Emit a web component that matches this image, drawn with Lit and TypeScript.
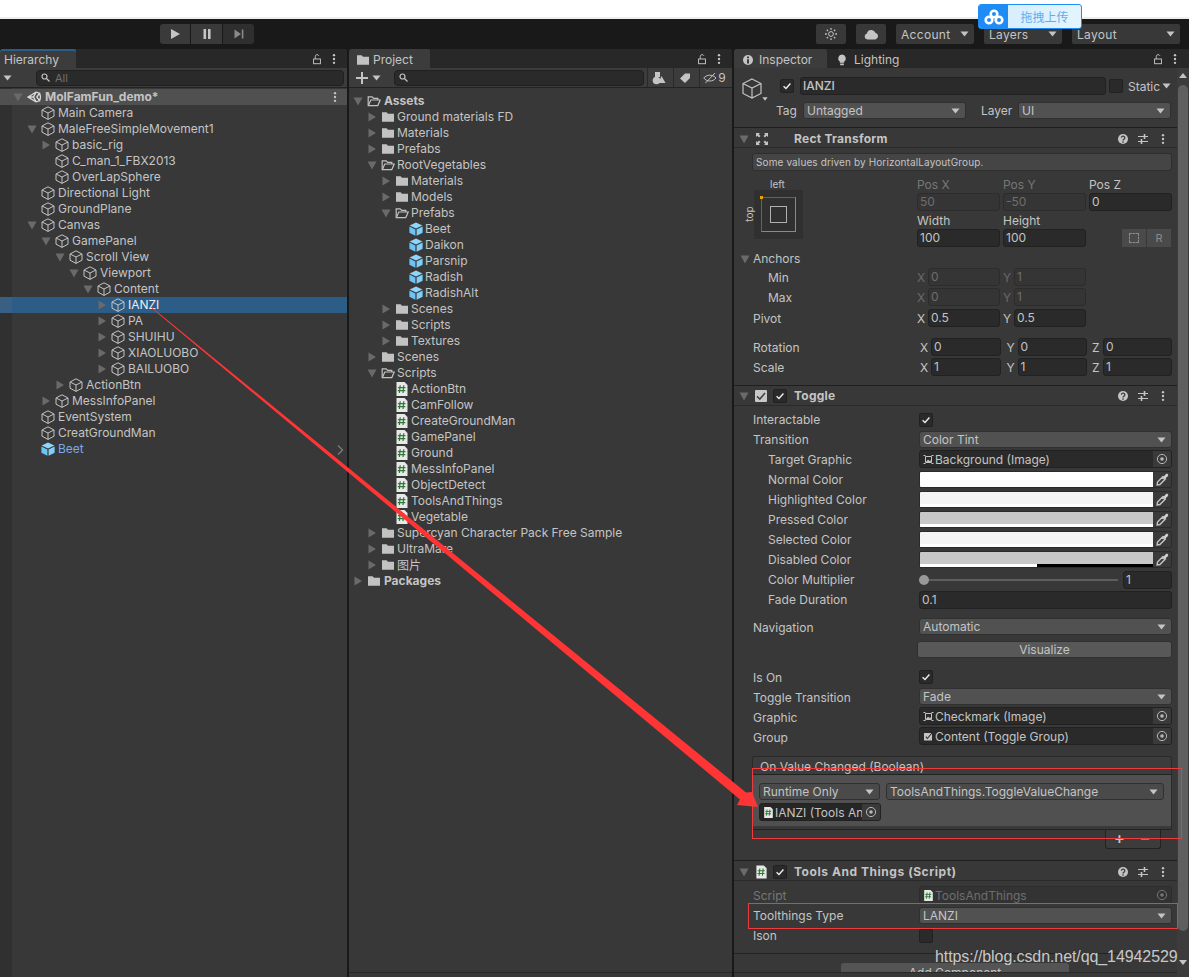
import { LitElement, html, css, svg } from 'lit';
import { customElement } from 'lit/decorators.js';

/* ── Icons ─────────────────────────── */
const cube = (c = '#c4c4c4') => html`<svg class="ic" viewBox="0 0 14 14" fill="none" stroke=${c} stroke-width="1"><path d="M7 .8 13 4v6.2l-6 3.2-6-3.2V4zM1 4l6 3 6-3M7 7v6.4"/></svg>`;
const prefab = () => html`<svg class="ic" viewBox="0 0 14 14"><path d="M7 .5 13.4 3.6 7 6.6.6 3.6z" fill="#8fd6fa"/><path d="M.4 4.6 6.4 7.5v6.2L.4 10.7z" fill="#6cc4f4"/><path d="M13.6 4.6 7.6 7.5v6.2l6-3z" fill="#7fcff8"/></svg>`;
const folder = () => html`<svg class="ic" viewBox="0 0 14 14"><path d="M1 2.2h4.6l1.4 1.6h6v8H1z" fill="#c2c2c2"/></svg>`;
const folderOpen = () => html`<svg class="ic" viewBox="0 0 14 14" fill="none" stroke="#c2c2c2" stroke-width="1.2"><path d="M1.2 11.5V2.8h4l1.4 1.5h4.2v1.6"/><path d="M1.4 11.6 3.8 6h9.4l-2.4 5.6z" fill="#383838"/></svg>`;
const script = () => html`<svg class="ic" viewBox="0 0 14 14"><path d="M1.5 0h8l3 3v11h-11z" fill="#e8e8e8"/><path d="M5.2 3.2 4.4 11M8.8 3.2 8 11M2.9 5.6h7.6M2.7 8.6h7.6" stroke="#2c7a35" stroke-width="1.2" fill="none"/></svg>`;
const tri = (d: string) =>
  html`<svg class="tri" viewBox="0 0 12 12">${d === 'r'
    ? svg`<path d="M2.5 1.5 10 6 2.5 10.5z" fill="#6a6a6a"/>`
    : d === 'd'
      ? svg`<path d="M1.5 2.5h9L6 10.5z" fill="#6a6a6a"/>`
      : ''}</svg>`;
const caret = () => html`<svg class="caret" viewBox="0 0 9 6"><path d="M.5.5h8L4.5 5.5z" fill="#c4c4c4"/></svg>`;
const kebab = () => html`<svg class="tool" viewBox="0 0 12 14"><g fill="#c4c4c4"><circle cx="6" cy="2.5" r="1.4"/><circle cx="6" cy="7" r="1.4"/><circle cx="6" cy="11.5" r="1.4"/></g></svg>`;
const lock = () => html`<svg class="tool" viewBox="0 0 12 14" fill="none" stroke="#c4c4c4" stroke-width="1.1"><rect x="2" y="7" width="8" height="5.5"/><path d="M4 7V4a2.2 2.2 0 0 1 4.2-.8"/></svg>`;
const help = () => html`<svg class="tool" viewBox="0 0 12 12"><circle cx="6" cy="6" r="5" fill="#c4c4c4"/><path d="M4.4 4.7a1.7 1.7 0 1 1 2.4 1.6c-.6.3-.8.6-.8 1.1" fill="none" stroke="#3c3c3c" stroke-width="1.3"/><circle cx="6" cy="9.1" r=".8" fill="#3c3c3c"/></svg>`;
const sliders = () => html`<svg class="tool" viewBox="0 0 12 12" fill="none" stroke="#c4c4c4" stroke-width="1.2"><path d="M1 3.5h10M1 8.5h10"/><path d="M7.5 1v5M4.5 6v5" stroke-width="1.6"/></svg>`;
const target = () => html`<svg class="tool" viewBox="0 0 12 12"><circle cx="6" cy="6" r="4.6" fill="none" stroke="#b8b8b8" stroke-width="1"/><circle cx="6" cy="6" r="1.8" fill="#b8b8b8"/></svg>`;
const picker = () => html`<svg class="pick" viewBox="0 0 12 12"><path d="M1 11 1.400 8.400 6 3.800 8.200 6 3.600 10.600z" fill="none" stroke="#c4c4c4" stroke-width="1.300"/><path d="M5.500 2.600 7.400 3 9 1.200c.6-.6 1.400-.6 1.900 0 .5.500.5 1.300 0 1.800L9 4.600l.4 1.900z" fill="#d0d0d0"/></svg>`;
const imageIc = () => html`<svg class="ic10" viewBox="0 0 11 11" fill="none" stroke="#c4c4c4"><path d="M2.500 2.500h6v6h-6z"/><path d="M.5 1.500h2M8.500 1.500h2M.5 9.500h2M8.500 9.500h2" stroke-width="1"/><path d="M3 8 5 5.500l1.500 1.500 1-1L8 8z" fill="#c4c4c4" stroke="none"/></svg>`;
const toggleIc = () => html`<svg class="ic10" viewBox="0 0 11 11"><rect x="1" y="2" width="8" height="7.500" fill="#c4c4c4"/><path d="M2.800 5.700 4.400 7.500l4.500-5.500" stroke="#2a2a2a" fill="none" stroke-width="1.100"/></svg>`;
const check = () => html`<svg viewBox="0 0 14 14" class="chk"><path d="M3 7.4 5.8 10 11 4" fill="none" stroke="#eee" stroke-width="1.6"/></svg>`;
const cb = (on = true) => html`<span class="cb">${on ? check() : ''}</span>`;
const unity = () => html`<svg class="ic" viewBox="0 0 14 14" fill="none" stroke="#d8d8d8" stroke-width="1.4"><path d="M1 7 9 2.2l3.6 1 1 3.8-1 3.8-3.6 1zM9 2.2 6.6 7 9 11.8M1 7h5.6M12.6 3.2 9.8 7l2.8 3.8"/></svg>`;

/* ── Tree data ─────────────────────── */
type Row = [number, string, string, string?];

const HIERARCHY: Row[] = [
  [1, 'Main Camera', ''],
  [1, 'MaleFreeSimpleMovement1', 'd'],
  [2, 'basic_rig', 'r'],
  [2, 'C_man_1_FBX2013', ''],
  [2, 'OverLapSphere', ''],
  [1, 'Directional Light', ''],
  [1, 'GroundPlane', ''],
  [1, 'Canvas', 'd'],
  [2, 'GamePanel', 'd'],
  [3, 'Scroll View', 'd'],
  [4, 'Viewport', 'd'],
  [5, 'Content', 'd'],
  [6, 'IANZI', 'r', 'sel'],
  [6, 'PA', 'r'],
  [6, 'SHUIHU', 'r'],
  [6, 'XIAOLUOBO', 'r'],
  [6, 'BAILUOBO', 'r'],
  [3, 'ActionBtn', 'r'],
  [2, 'MessInfoPanel', 'r'],
  [1, 'EventSystem', ''],
  [1, 'CreatGroundMan', ''],
  [1, 'Beet', '', 'blue'],
];

const PROJECT: Row[] = [
  [0, 'Assets', 'd', 'bold'],
  [1, 'Ground materials FD', 'r'],
  [1, 'Materials', 'r'],
  [1, 'Prefabs', 'r'],
  [1, 'RootVegetables', 'd'],
  [2, 'Materials', 'r'],
  [2, 'Models', 'r'],
  [2, 'Prefabs', 'd'],
  [3, 'Beet', 'p'],
  [3, 'Daikon', 'p'],
  [3, 'Parsnip', 'p'],
  [3, 'Radish', 'p'],
  [3, 'RadishAlt', 'p'],
  [2, 'Scenes', 'r'],
  [2, 'Scripts', 'r'],
  [2, 'Textures', 'r'],
  [1, 'Scenes', 'r'],
  [1, 'Scripts', 'd'],
  [2, 'ActionBtn', 's'],
  [2, 'CamFollow', 's'],
  [2, 'CreateGroundMan', 's'],
  [2, 'GamePanel', 's'],
  [2, 'Ground', 's'],
  [2, 'MessInfoPanel', 's'],
  [2, 'ObjectDetect', 's'],
  [2, 'ToolsAndThings', 's'],
  [2, 'Vegetable', 's'],
  [1, 'Supercyan Character Pack Free Sample', 'r'],
  [1, 'UltraMare', 'r'],
  [1, '图片', 'r'],
  [0, 'Packages', 'r', 'bold'],
];

const COLORS: [string, string, string?, string?][] = [
  ['Normal Color', '#ffffff'],
  ['Highlighted Color', '#f5f5f5', '#ffffff'],
  ['Pressed Color', '#c8c8c8', '#ffffff'],
  ['Selected Color', '#f5f5f5', '#ffffff'],
  ['Disabled Color', '#c8c8c8', '#ffffff', '#000000'],
];

@customElement('app-root')
export class AppRoot extends LitElement {
  static styles = css`
    :host {
      display: block;
      position: relative;
      width: 1189px;
      height: 977px;
      overflow: hidden;
      background: #191919;
      font-family: Inter, 'Noto Sans CJK SC', sans-serif;
      font-size: 12px;
      color: #c4c4c4;
    }
    svg { display: block; flex: none; }
    .ic { width: 14px; height: 14px; }
    .ic10 { width: 11px; height: 11px; margin-right: 1px; }
    .tri { width: 12px; height: 12px; }
    .caret { width: 9px; height: 6px; }
    .tool { width: 12px; height: 12px; }
    .pick { width: 13px; height: 13px; }
    .chk { width: 14px; height: 14px; }

    /* ── Top strip ────────────────── */
    .browser { height: 17px; background: #fff; border-bottom: 2px solid #eeeeee; }
    .toolbar {
      position: relative;
      height: 30px;
      background: #191919;
      display: flex;
      align-items: center;
    }
    .play {
      display: flex;
      gap: 1px;
      margin-left: 160px;
    }
    .play span {
      width: 31px;
      height: 20px;
      background: #3a3a3a;
      display: flex;
      align-items: center;
      justify-content: center;
    }
    .play span:first-child { width: 30px; border-radius: 3px 0 0 3px; }
    .play span:last-child { border-radius: 0 3px 3px 0; background: #2f2f2f; }
    .tb-right { display: flex; gap: 10px; margin-left: auto; margin-right: 9px; }
    .tb-btn {
      width: 30px;
      height: 20px;
      background: #383838;
      border-radius: 2px;
      display: flex;
      align-items: center;
      justify-content: center;
    }
    .cloud { width: 15px; height: 11px; }
    .tb-drop {
      width: 78px;
      height: 20px;
      box-sizing: border-box;
      padding: 0 5px;
      background: #383838;
      border-radius: 2px;
      display: flex;
      align-items: center;
      justify-content: space-between;
      letter-spacing: 0.3px;
    }
    .tb-drop.wide { width: 108px; }

    .upload {
      position: absolute;
      left: 978px;
      top: 4px;
      width: 104px;
      height: 25px;
      box-sizing: border-box;
      display: flex;
      border: 1px solid #1e8cf4;
      border-radius: 3px;
      overflow: hidden;
      background: linear-gradient(90deg, #d2ecfd, #e4f4fe);
      color: #5bb0ef;
    }
    .upload b {
      width: 29px;
      background: #1e8cf4;
      display: flex;
      align-items: center;
      justify-content: center;
    }
    .upload b svg { width: 20px; height: 16px; }
    .upload i {
      flex: 1;
      font-style: normal;
      text-align: center;
      line-height: 23px;
      font-family: 'Noto Sans CJK SC', sans-serif;
    }

    /* ── Panels ───────────────────── */
    .panels {
      display: flex;
      gap: 2px;
      height: 928px;
    }
    .panel {
      display: flex;
      flex-direction: column;
      background: #383838;
      overflow: hidden;
      border-radius: 3px 3px 0 0;
    }
    .hier { width: 347px; }
    .proj { width: 383px; }
    .insp { width: 455px; }

    .tabs {
      flex: none;
      height: 19px;
      background: #282828;
      display: flex;
      align-items: stretch;
    }
    .tab {
      display: flex;
      align-items: center;
      gap: 4px;
      padding: 2px 5px 0;
      background: #3c3c3c;
      border-radius: 2px 2px 0 0;
      box-sizing: border-box;
    }
    .tab.blue { box-shadow: inset 0 2px 0 #2c5d87; padding-left: 4px; width: 76px; }
    .tab.project { width: 81px; padding-left: 7px; gap: 3px; }
    .tab.inspector { width: 93px; padding-left: 8px; gap: 5px; }
    .tab.plain { background: none; padding-left: 9px; gap: 6px; }
    .tabs .end { margin-left: auto; display: flex; align-items: center; gap: 5px; padding-right: 7px; }
    .tabs .end.in { padding-right: 8px; }

    .bar {
      flex: none;
      height: 20px;
      box-sizing: border-box;
      background: #3c3c3c;
      border-bottom: 1px solid #232323;
      display: flex;
      align-items: center;
    }
    .search {
      flex: none;
      height: 16px;
      box-sizing: border-box;
      background: #2a2a2a;
      border: 1px solid #202020;
      border-radius: 4px;
      display: flex;
      align-items: center;
      gap: 5px;
      padding-left: 4px;
      font-size: 11px;
      color: #6f6f6f;
    }
    .hier .search { width: 308px; margin-left: 24px; }
    .hier .bar { padding-left: 3px; }
    .proj .search { width: 250px; margin: 0 3px 0 13px; }
    .proj .bar { padding-left: 7px; }
    .proj .bar .caret { margin-left: 4px; }
    .mag { width: 9px; height: 9px; }
    .pbtn {
      flex: none;
      height: 19px;
      box-sizing: border-box;
      width: 26px;
      padding-right: 3px;
      border-left: 1px solid #2a2a2a;
      display: flex;
      align-items: center;
      justify-content: center;
    }
    .pbtn.eye { width: 33px; gap: 1px; }

    /* ── Trees ────────────────────── */
    .tree {
      flex: 1;
      overflow: hidden;
      background: linear-gradient(90deg, #303030 12px, #383838 12px);
    }
    .proj .tree { background: #383838; padding-top: 5px; }
    .row {
      height: 16px;
      display: flex;
      align-items: center;
      white-space: nowrap;
    }
    .row .ic { margin-left: 3px; }
    .row .name { margin-left: 3px; padding-bottom: 2px; }
    .proj .row .name { margin-left: 2px; }
    .proj .row.bold .name { margin-left: 3px; }
    .row.sel {
      background: linear-gradient(90deg, #3a5f84 12px, #2c5d87 12px);
      color: #eee;
    }
    .row.blue { color: #7ba7e6; }
    .row.bold .name { font-weight: 700; }
    .scene {
      height: 16px;
      margin-top: 1px;
      background: #505050;
      display: flex;
      align-items: center;
      padding-left: 12px;
    }
    .scene .ic { margin-left: 3px; }
    .scene .name { margin-left: 4px; padding-bottom: 2px; font-weight: 700; }
    .scene .tool { margin-left: auto; margin-right: 6px; }
    .chev {
      display: flex;
      justify-content: flex-end;
      margin: -13px 1px 0 0;
    }
    .proj .foot { flex: none; height: 4px; background: #383838; border-top: 1px solid #2a2a2a; }

    /* ── Inspector ────────────────── */
    .insp-body { flex: 1; display: flex; min-height: 0; }
    .content { width: 443px; flex: none; overflow: hidden; display: flex; flex-direction: column; }
    .content > * { flex: none; }
    .scroll {
      flex: 1;
      background: #3c3c3c;
      display: flex;
      flex-direction: column;
      align-items: center;
      padding-top: 5px;
      box-sizing: border-box;
    }
    .thumb { width: 10px; height: 846px; margin-top: 7px; background: #5f5f5f; border-radius: 5px; }
    .sarrow { width: 8px; height: 5px; }
    .sarrow.down { margin-top: 29px; }

    .head { height: 59px; box-sizing: border-box; padding: 9px 6px 0 0; }
    .h1, .h2 { display: flex; align-items: center; }
    .h1 { height: 18px; }
    .h2 { height: 17px; margin-top: 7px; }
    .cubewrap { width: 21px; height: 23px; margin-left: 8px; position: relative; top: 3px; flex: none; }
    .cubewrap .cubebig { width: 21px; height: 23px; }
    .cubewrap .mini { position: absolute; left: 20px; top: 19px; width: 6px; height: 4px; }
    .h1 .cb { margin-left: 17px; }
    .nameF {
      width: 306px;
      height: 18px;
      margin-left: 6px;
      flex: none;
      box-sizing: border-box;
      background: #2a2a2a;
      border: 1px solid #212121;
      border-radius: 3px;
      padding-left: 2px;
      line-height: 16px;
      font-weight: 500;
    }
    .static { margin: 0 2px 0 5px; }
    .h1 .cb.s { margin-left: 3px; }
    .h2 label { margin-left: 42px; width: 27px; flex: none; }
    .h2 label.l2 { margin-left: 15px; width: 37px; }
    .dd.tagdd { flex: none; width: 163px; }

    .cbar {
      height: 21px;
      box-sizing: border-box;
      border-top: 1px solid #1f1f1f;
      border-bottom: 1px solid #2a2a2a;
      display: flex;
      align-items: center;
      padding: 2px 0 0 4px;
      font-weight: 700;
      letter-spacing: 0.25px;
    }
    .cbar.tg { padding-top: 0; }
    .cbar .tri { margin-right: 5px; }
    .cbar .title { margin-left: 7px; }
    .cbar .title.far { margin-left: 25px; }
    .cbar .title.wide { letter-spacing: 0.55px; }
    .cbar .ctl { margin-left: auto; display: flex; gap: 8px; margin-right: 8px; }
    .cb {
      flex: none;
      width: 14px;
      height: 14px;
      background: #2a2a2a;
      border: 1px solid #212121;
      border-radius: 2px;
      box-sizing: border-box;
      display: flex;
      align-items: center;
      justify-content: center;
    }
    .cb .chk { width: 12px; height: 12px; }
    .ccb {
      width: 12px;
      height: 12px;
      flex: none;
      background: #c8c8c8;
      border-radius: 1px;
      margin-right: 6px;
      display: flex;
      align-items: center;
      justify-content: center;
    }
    .ccb path { stroke: #444; }
    .ccb.sc { background: none; height: 14px; }
    .ccb.sc .ic { width: 13px; height: 14px; }
    .ccb.sc path:first-child { stroke: none; }
    .ccb.sc path:last-child { stroke: #2c7a35; }

    .rect { height: 237px; box-sizing: border-box; padding: 5px 5px 0 18px; }
    .helpbox {
      height: 18px;
      box-sizing: border-box;
      background: #454545;
      border: 1px solid #2e2e2e;
      border-radius: 3px;
      padding-left: 3px;
      font-size: 10px;
      line-height: 16px;
      letter-spacing: 0.12px;
    }
    .anch { display: flex; height: 75px; margin-top: 5px; }
    .anchL { width: 165px; position: relative; flex: none; }
    .anchL .lft { position: absolute; left: 18px; top: 2px; font-size: 10px; }
    .anchL .top { position: absolute; left: -11px; top: 32px; font-size: 10px; transform: rotate(-90deg); }
    .abox {
      position: absolute;
      left: 2px;
      top: 14px;
      width: 49px;
      height: 49px;
      box-sizing: border-box;
      padding: 7px;
      background: #303030;
    }
    .aframe {
      position: relative;
      height: 100%;
      box-sizing: border-box;
      border: 1px solid #8a8a8a;
      border-top-color: #8f4f4f;
      border-left-color: #8f4f4f;
      display: flex;
      align-items: center;
      justify-content: center;
    }
    .aframe i { width: 17px; height: 17px; box-sizing: border-box; border: 1px solid #b0b0b0; }
    .aframe b { position: absolute; left: -2px; top: -2px; width: 3px; height: 3px; background: #e2a400; }
    .agrid {
      display: grid;
      grid-template-columns: 83px 83px 83px;
      column-gap: 3px;
      grid-auto-rows: 18px;
      row-gap: 18px;
      padding-top: 17px;
      position: relative;
    }
    .f {
      box-sizing: border-box;
      height: 18px;
      background: #2a2a2a;
      border: 1px solid #212121;
      border-radius: 3px;
      padding-left: 2px;
      line-height: 16px;
      min-width: 0;
    }
    .f.off { background: #353535; border-color: #2c2c2c; color: #6e6e6e; }
    .cap { position: relative; }
    .cap span { position: absolute; top: -16px; left: 0; }
    .cap.off span { color: #777; }
    .rbtns { display: flex; gap: 1px; align-self: center; justify-self: end; margin-right: 1px; }
    .rbtns span {
      width: 24px;
      height: 18px;
      background: #4a4a4a;
      display: flex;
      align-items: center;
      justify-content: center;
      color: #8a8a8a;
      font-size: 11px;
    }
    .rbtns i { width: 10px; height: 10px; border: 1px dashed #8a8a8a; box-sizing: border-box; }
    .arows { margin: 0 -5px 0 -18px; }

    .p {
      height: 20px;
      display: grid;
      grid-template-columns: 166px 1fr;
      align-items: center;
      padding: 0 5px 0 19px;
      white-space: nowrap;
    }
    .p > span:first-child { padding-bottom: 2px; }
    .p.in { grid-template-columns: 151px 1fr; padding-left: 34px; }
    .p.s18 { height: 18px; }
    .p.s18 > span:first-child, .p.late > span:first-child { padding-bottom: 0; }
    .mt1 { margin-top: 1px; }
    .mt2 { margin-top: 2px; }
    .mt3 { margin-top: 3px; }
    .mt11 { margin-top: 11px; }
    .p .f { height: 18px; }
    .lab-off { color: #777; }
    .xyz { display: flex; margin-left: -2px; }
    .ax { display: flex; align-items: center; width: 83px; margin-right: 3px; flex: none; }
    .ax em { font-style: normal; width: 11px; flex: none; }
    .ax .f { flex: 1; }
    .ax.off em { color: #6a6a6a; }
    .xyz3 { display: grid; grid-template-columns: 81px 80px 80px; column-gap: 5.5px; margin-left: 1px; }
    .xyz3 .ax { width: auto; margin: 0; }
    .p.anc { height: 16px; padding-left: 5px; grid-template-columns: 1fr; }
    .p.anc span { display: flex; align-items: center; gap: 2px; }

    .dd {
      box-sizing: border-box;
      height: 17px;
      background: #515151;
      border: 1px solid #303030;
      border-radius: 3px;
      display: flex;
      align-items: center;
      justify-content: space-between;
      padding: 0 5px 0 3px;
      flex: 1;
      min-width: 0;
    }
    .p > .dd { align-self: start; margin-top: 1px; }
    .obj {
      box-sizing: border-box;
      height: 18px;
      background: #2a2a2a;
      border: 1px solid #212121;
      border-radius: 3px;
      display: flex;
      align-items: center;
      padding-left: 3px;
      overflow: hidden;
      white-space: nowrap;
    }
    .p > .obj { align-self: start; }
    .obj .tgt {
      margin-left: auto;
      flex: none;
      width: 18px;
      height: 16px;
      background: #3a3a3a;
      display: flex;
      align-items: center;
      justify-content: center;
    }
    .obj.off { background: #333; color: #6e6e6e; border-color: #2c2c2c; }
    .obj.off .tgt { background: none; opacity: 0.5; }
    .obj .ic { width: 11px; height: 11px; margin-right: 1px; }
    .obj .txt { overflow: hidden; }

    .color {
      display: flex;
      align-self: start;
      margin-top: 1px;
      height: 17px;
      border: 1px solid #2a2a2a;
      border-radius: 2px;
      overflow: hidden;
      box-sizing: border-box;
    }
    .swatch { flex: 1; display: flex; flex-direction: column; }
    .swatch u { flex: 1; }
    .swatch s { height: 3px; display: flex; }
    .swatch s b { flex: 1; }
    .drop { width: 18px; flex: none; background: #3a3a3a; display: flex; align-items: center; justify-content: center; }
    .slider { display: flex; align-items: center; }
    .track { flex: 1; height: 2px; background: #5e5e5e; position: relative; margin-right: 5px; }
    .knob { position: absolute; left: 0; top: -4px; width: 10px; height: 10px; border-radius: 50%; background: #999; }
    .slider .f { width: 49px; flex: none; }

    .toggle { height: 454px; box-sizing: border-box; padding-top: 4px; }
    .gap7 { margin-top: 7px; }
    .gap8 { margin-top: 8px; }
    .btn {
      margin-left: -2px;
      background: #585858;
      border: 1px solid #303030;
      border-radius: 3px;
      text-align: center;
      line-height: 15px;
      height: 15px;
    }

    .event { margin: 9px 5px 0 18px; position: relative; }
    .ev-h {
      height: 19px;
      box-sizing: border-box;
      background: #3c3c3c;
      border: 1px solid #2a2a2a;
      border-bottom-color: #222;
      border-radius: 3px 3px 0 0;
      padding-left: 7px;
      line-height: 20px;
    }
    .ev-b {
      height: 55px;
      box-sizing: border-box;
      background: #505050;
      border: 1px solid #2a2a2a;
      border-top: 0;
      border-bottom-color: #222;
      box-shadow: inset 0 -3px 0 #3a3a3a;
      padding: 8px 7px 0 6px;
    }
    .ev-r { display: flex; gap: 6px; height: 18px; }
    .ev-r .dd.a { flex: none; width: 121px; background: #4a4a4a; }
    .ev-r .dd { background: #4a4a4a; }
    .ev-b .obj { width: 122px; margin-top: 2px; background: #262626; }
    .plus {
      position: absolute;
      right: 11px;
      top: 74px;
      width: 56px;
      height: 19px;
      box-sizing: border-box;
      border: 1px solid #222;
      border-top: 0;
      border-radius: 0 0 3px 3px;
      background: #3c3c3c;
      display: flex;
      justify-content: center;
      gap: 16px;
      font-size: 16px;
      font-weight: 600;
      line-height: 16px;
      padding-right: 3px;
    }
    .plus span:last-child { color: #808080; }
    .script { height: 72px; box-sizing: border-box; padding-top: 5px; }
    .after { height: 19px; border-top: 1px solid #232323; box-sizing: border-box; overflow: hidden; }
    .add { border-top: 1px solid #2a2a2a; height: 5px; box-sizing: border-box; }
    .addbtn {
      width: 228px;
      margin: 9px 0 0 107px;
      height: 20px;
      background: #545454;
      border-radius: 3px;
      text-align: center;
      line-height: 20px;
    }

    /* ── Annotations ──────────────── */
    .anno { position: absolute; left: 0; top: 0; width: 1189px; height: 977px; pointer-events: none; }
    .mark { position: absolute; border: 1.5px solid #ef3b3b; box-sizing: border-box; }
    .m1 { left: 752px; top: 768px; width: 430px; height: 71px; }
    .m2 { left: 748px; top: 903px; width: 430px; height: 26px; }
    .wm {
      position: absolute;
      left: 935px;
      top: 948px;
      font-family: 'Liberation Sans', sans-serif;
      font-size: 16px;
      line-height: 18px;
      letter-spacing: -0.09px;
      color: #c8c8c8;
      white-space: nowrap;
    }
  `;

  private hierRow(r: Row) {
    const [d, name, arrow, cls] = r;
    return html`<div class="row ${cls ?? ''}" style="padding-left:${12 + 14 * d}px">
      ${tri(arrow)}${cls === 'blue' ? prefab() : cube()}<span class="name">${name}</span>
    </div>`;
  }

  private projRow(r: Row) {
    const [d, name, kind, cls] = r;
    const icon = kind === 'p' ? prefab() : kind === 's' ? script() : kind === 'd' ? folderOpen() : folder();
    return html`<div class="row ${cls ?? ''}" style="padding-left:${3 + 14 * d}px">
      ${tri(kind === 'r' || kind === 'd' ? kind : '')}${icon}<span class="name">${name}</span>
    </div>`;
  }

  private ax(l: string, v: string, off = false) {
    return html`<span class="ax ${off ? 'off' : ''}"><em>${l}</em><span class="f ${off ? 'off' : ''}">${v}</span></span>`;
  }

  private dd(v: string, cls = '') {
    return html`<span class="dd ${cls}"><span>${v}</span>${caret()}</span>`;
  }

  private obj(icon: unknown, v: string, cls = '') {
    return html`<span class="obj ${cls}">${icon}<span class="txt">${v}</span><span class="tgt">${target()}</span></span>`;
  }

  private colorRow(c: [string, string, string?, string?]) {
    const [label, main, under, under2] = c;
    return html`<div class="p in">
      <span>${label}</span>
      <span class="color">
        <span class="swatch" style="background:${main}">
          <u></u>
          ${under
            ? html`<s><b style="background:${under}"></b>${under2 ? html`<b style="background:${under2}"></b>` : ''}</s>`
            : ''}
        </span>
        <span class="drop">${picker()}</span>
      </span>
    </div>`;
  }

  private get mag() {
    return html`<svg class="mag" viewBox="0 0 9 9" fill="none" stroke="#c4c4c4" stroke-width="1.2"><circle cx="3.5" cy="3.5" r="2.5"/><path d="M5.5 5.5 8.5 8.5"/></svg>`;
  }

  render() {
    return html`
      <div class="browser"></div>
      <div class="toolbar">
        <div class="play">
          <span><svg class="tool" viewBox="0 0 12 12"><path d="M2 1 11 6 2 11z" fill="#c4c4c4"/></svg></span>
          <span><svg class="tool" viewBox="0 0 12 12"><path d="M2.5 1h2.6v10H2.5zM7 1h2.6v10H7z" fill="#c4c4c4"/></svg></span>
          <span><svg class="tool" viewBox="0 0 12 12"><path d="M1.5 1.5 8 6l-6.5 4.5zM8.8 1.5h1.6v9H8.800z" fill="#8a8a8a"/></svg></span>
        </div>
        <div class="tb-right">
          <span class="tb-btn"><svg class="tool" viewBox="0 0 12 12" fill="none" stroke="#c4c4c4"><circle cx="6" cy="6" r="2.4"/><path d="M6 0v1.8M6 10.200V12M0 6h1.800M10.200 6H12M1.800 1.800 3 3M9 9l1.200 1.200M1.800 10.200 3 9M9 3l1.200-1.200" stroke-width="1.300"/></svg></span>
          <span class="tb-btn"><svg class="cloud" viewBox="0 0 15 11"><path d="M3.500 10.500a3 3 0 0 1-.6-5.900 4.500 4.500 0 0 1 8.500-.9 3.500 3.500 0 0 1 0 6.800z" fill="#c4c4c4"/></svg></span>
          <span class="tb-drop"><span>Account</span>${caret()}</span>
          <span class="tb-drop"><span>Layers</span>${caret()}</span>
          <span class="tb-drop wide"><span>Layout</span>${caret()}</span>
        </div>
      </div>

      <div class="panels">
        <section class="panel hier">
          <div class="tabs">
            <div class="tab blue">Hierarchy</div>
            <div class="end">${lock()}${kebab()}</div>
          </div>
          <div class="bar">
            ${caret()}
            <div class="search">${this.mag}<span>All</span></div>
          </div>
          <div class="tree">
            <div class="scene">${tri('d')}${unity()}<span class="name">MolFamFun_demo*</span>${kebab()}</div>
            ${HIERARCHY.map(r => this.hierRow(r))}
            <div class="chev">
              <svg class="tool" viewBox="0 0 12 12" fill="none" stroke="#7c7c7c" stroke-width="1.300"><path d="M4 1.500 8.500 6 4 10.500"/></svg>
            </div>
          </div>
        </section>

        <section class="panel proj">
          <div class="tabs">
            <div class="tab project">${folder()}Project</div>
            <div class="end">${lock()}${kebab()}</div>
          </div>
          <div class="bar">
            <svg class="tool" viewBox="0 0 12 12"><path d="M5 0h2v5h5v2H7v5H5V7H0V5h5z" fill="#c4c4c4"/></svg>
            ${caret()}
            <div class="search">${this.mag}</div>
            <span class="pbtn"><svg class="ic" viewBox="0 0 14 14"><circle cx="4.500" cy="9.500" r="3.800" fill="#c4c4c4"/><path d="M3 1h5v5H3z" fill="#c4c4c4"/><path d="M9.500 5 13.500 12H6.500z" fill="#c4c4c4"/></svg></span>
            <span class="pbtn"><svg class="tool" viewBox="0 0 12 12"><path d="M1 6.500 6 1.500h5v4.500L6 11z" fill="#c4c4c4"/></svg></span>
            <span class="pbtn eye"><svg class="ic" viewBox="0 0 14 14" fill="none" stroke="#c4c4c4"><path d="M.8 7C3 3.800 9.500 2.800 13 7 10 11 3.500 11 .8 7z"/><path d="M2.500 12 12 2"/></svg>9</span>
          </div>
          <div class="tree">${PROJECT.map(r => this.projRow(r))}</div>
          <div class="foot"></div>
        </section>

        <section class="panel insp">
          <div class="tabs">
            <div class="tab inspector">
              <svg class="tool" viewBox="0 0 12 12"><circle cx="6" cy="6" r="5" fill="#c4c4c4"/><path d="M5 2.500h2v1.800H5zM5 5.200h2v4.300H5z" fill="#3c3c3c"/></svg>Inspector
            </div>
            <div class="tab plain">
              <svg class="tool" viewBox="0 0 12 12"><path d="M6 .500a3.800 3.800 0 0 1 2.200 6.900v1.400H3.800V7.400A3.800 3.800 0 0 1 6 .500zM4.200 9.500h3.600v1.800H4.200z" fill="#c4c4c4"/></svg>Lighting
            </div>
            <div class="end in">${lock()}${kebab()}</div>
          </div>
          <div class="insp-body">
            <div class="content">
              <div class="head">
                <div class="h1">
                  <span class="cubewrap">
                    <svg class="cubebig" viewBox="0 0 21 23" fill="none" stroke="#c4c4c4" stroke-width="1.200"><path d="M10 1 19 5.500v10L10 20 1 15.500v-10zM1 5.500 10 10l9-4.500M10 10v10"/></svg>
                    <svg class="mini" viewBox="0 0 9 6"><path d="M.5.5h8L4.500 5.500z" fill="#c4c4c4"/></svg>
                  </span>
                  ${cb()}
                  <span class="nameF">IANZI</span>
                  <span class="cb s"></span>
                  <span class="static">Static</span>${caret()}
                </div>
                <div class="h2">
                  <label>Tag</label>${this.dd('Untagged', 'tagdd')}
                  <label class="l2">Layer</label>${this.dd('UI')}
                </div>
              </div>

              <div class="cbar">
                ${tri('d')}
                <svg class="ic" viewBox="0 0 14 14"><g fill="#c4c4c4"><path d="M1 1h4L3.700 2.300 5.500 4 4 5.500 2.300 3.700 1 5zM13 1v4l-1.300-1.300L10 5.500 8.500 4l1.800-1.700L9 1zM1 13V9l1.300 1.300L4 8.500 5.500 10l-1.800 1.700L5 13zM13 13H9l1.300-1.300L8.500 10 10 8.500l1.700 1.800L13 9z"/></g></svg>
                <span class="title far">Rect Transform</span>
                <span class="ctl">${help()}${sliders()}${kebab()}</span>
              </div>
              <div class="rect">
                <div class="helpbox">Some values driven by HorizontalLayoutGroup.</div>
                <div class="anch">
                  <div class="anchL">
                    <span class="lft">left</span>
                    <div class="abox"><div class="aframe"><i></i><b></b></div></div>
                    <span class="top">top</span>
                  </div>
                  <div class="agrid">
                    <div class="cap off"><span>Pos X</span><div class="f off">50</div></div>
                    <div class="cap off"><span>Pos Y</span><div class="f off">-50</div></div>
                    <div class="cap"><span>Pos Z</span><div class="f">0</div></div>
                    <div class="cap"><span>Width</span><div class="f">100</div></div>
                    <div class="cap"><span>Height</span><div class="f">100</div></div>
                    <div class="rbtns"><span><i></i></span><span>R</span></div>
                  </div>
                </div>
                <div class="arows">
                  <div class="p anc"><span>${tri('d')}Anchors</span></div>
                  <div class="p in s18 mt1"><span>Min</span><span class="xyz">${this.ax('X', '0', true)}${this.ax('Y', '1', true)}</span></div>
                  <div class="p in s18 mt2"><span>Max</span><span class="xyz">${this.ax('X', '0', true)}${this.ax('Y', '1', true)}</span></div>
                  <div class="p s18 mt3"><span>Pivot</span><span class="xyz">${this.ax('X', '0.5')}${this.ax('Y', '0.5')}</span></div>
                  <div class="p s18 mt11"><span>Rotation</span><span class="xyz3">${this.ax('X', '0')}${this.ax('Y', '0')}${this.ax('Z', '0')}</span></div>
                  <div class="p s18 mt2"><span>Scale</span><span class="xyz3">${this.ax('X', '1')}${this.ax('Y', '1')}${this.ax('Z', '1')}</span></div>
                </div>
              </div>

              <div class="cbar tg">
                ${tri('d')}
                <span class="ccb">${check()}</span>${cb()}
                <span class="title">Toggle</span>
                <span class="ctl">${help()}${sliders()}${kebab()}</span>
              </div>
              <div class="toggle">
                <div class="p"><span>Interactable</span>${cb()}</div>
                <div class="p"><span>Transition</span>${this.dd('Color Tint')}</div>
                <div class="p in"><span>Target Graphic</span>${this.obj(imageIc(), 'Background (Image)')}</div>
                ${COLORS.map(c => this.colorRow(c))}
                <div class="p in">
                  <span>Color Multiplier</span>
                  <span class="slider"><span class="track"><span class="knob"></span></span><span class="f">1</span></span>
                </div>
                <div class="p in"><span>Fade Duration</span><span class="f">0.1</span></div>

                <div class="p late gap7"><span>Navigation</span>${this.dd('Automatic')}</div>
                <div class="p mt2"><span></span><div class="btn">Visualize</div></div>
                <div class="p late gap8"><span>Is On</span>${cb()}</div>
                <div class="p late"><span>Toggle Transition</span>${this.dd('Fade')}</div>
                <div class="p late"><span>Graphic</span>${this.obj(imageIc(), 'Checkmark (Image)')}</div>
                <div class="p late"><span>Group</span>${this.obj(toggleIc(), 'Content (Toggle Group)')}</div>

                <div class="event">
                  <div class="ev-h">On Value Changed (Boolean)</div>
                  <div class="ev-b">
                    <div class="ev-r">${this.dd('Runtime Only', 'a')}${this.dd('ToolsAndThings.ToggleValueChange')}</div>
                    <span class="obj">${script()}<span class="txt">IANZI (Tools An</span><span class="tgt">${target()}</span></span>
                  </div>
                  <div class="plus"><span>+</span><span>–</span></div>
                </div>
              </div>

              <div class="cbar">
                ${tri('d')}
                <span class="ccb sc">${script()}</span>${cb()}
                <span class="title wide">Tools And Things (Script)</span>
                <span class="ctl">${help()}${sliders()}${kebab()}</span>
              </div>
              <div class="script">
                <div class="p"><span class="lab-off">Script</span>${this.obj(script(), 'ToolsAndThings', 'off')}</div>
                <div class="p"><span>Toolthings Type</span>${this.dd('LANZI')}</div>
                <div class="p"><span>Ison</span>${cb(false)}</div>
              </div>
              <div class="after"><div class="addbtn">Add Component</div></div>
              <div class="add"></div>
            </div>
            <div class="scroll">
              <svg class="sarrow" viewBox="0 0 8 5"><path d="M4 0 8 5H0z" fill="#c4c4c4"/></svg>
              <div class="thumb"></div>
              <svg class="sarrow down" viewBox="0 0 8 5"><path d="M0 0h8L4 5z" fill="#c4c4c4"/></svg>
            </div>
          </div>
        </section>
      </div>

      <div class="upload">
        <b><svg viewBox="0 0 20 16" fill="none" stroke="#fff" stroke-width="2.600"><circle cx="10" cy="5" r="3.300"/><circle cx="5" cy="11" r="3.300"/><circle cx="15" cy="11" r="3.300"/></svg></b>
        <i>拖拽上传</i>
      </div>

      <svg class="anno" viewBox="0 0 1189 977">
        <polygon points="151.700,308.300 740,799.500 737,805 758,807 752,792 746,792.500 152.300,307.700" fill="#ff3535"/>
      </svg>
      <div class="mark m1"></div>
      <div class="mark m2"></div>
      <div class="wm">https://blog.csdn.net/qq_14942529</div>
    `;
  }
}
